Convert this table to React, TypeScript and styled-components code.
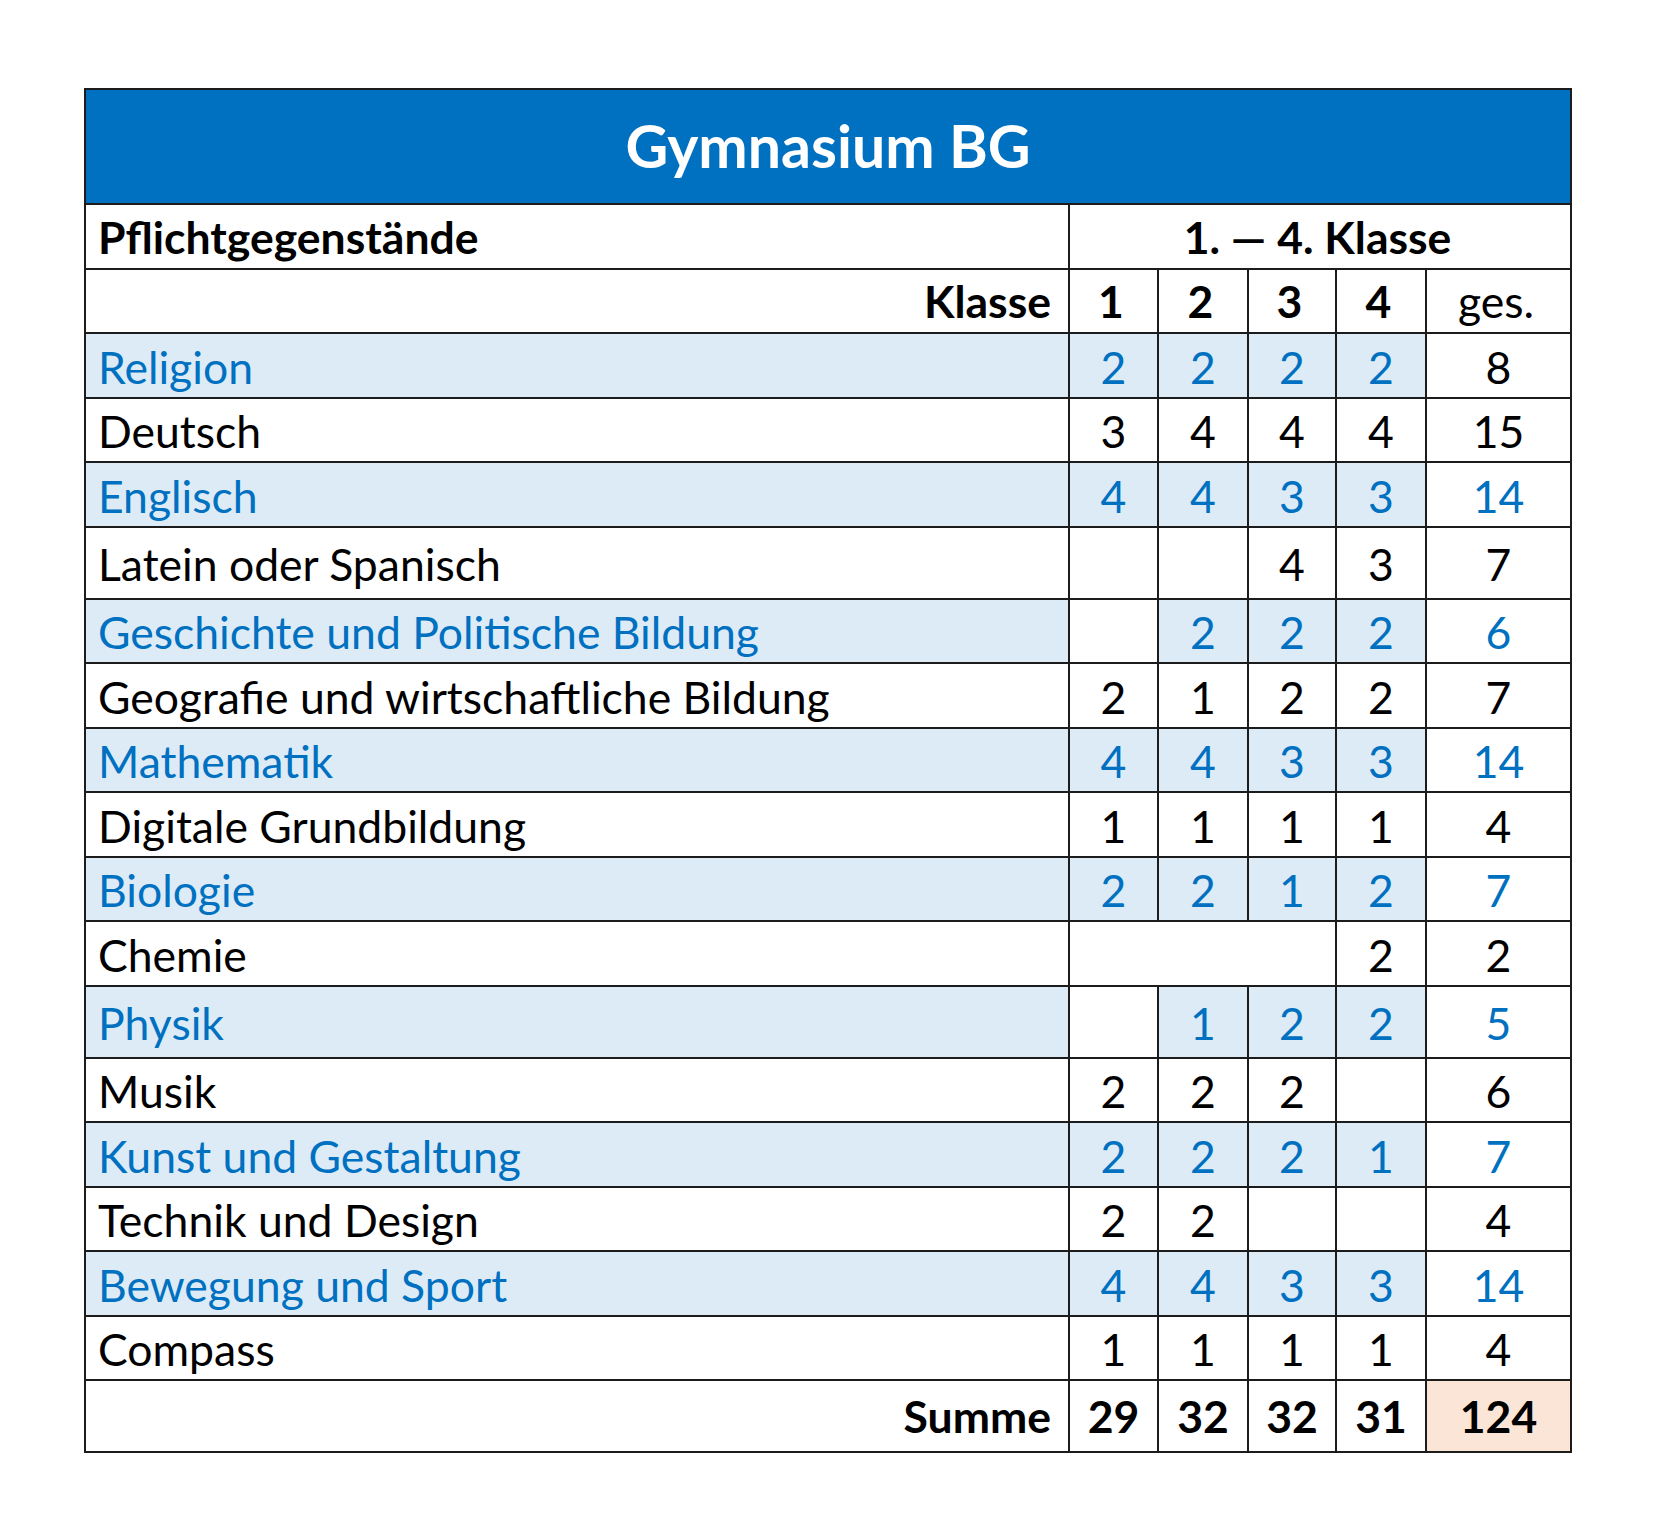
import React from 'react';
import styled, { createGlobalStyle } from 'styled-components';

const GlobalStyle = createGlobalStyle`
  html, body {
    margin: 0;
    padding: 0;
    background: #ffffff;
  }
  body {
    font-family: Lato, "Open Sans", "Liberation Sans", sans-serif;
  }
`;

const BLUE = '#0070c0';
const LIGHT = '#ddebf7';
const LINE = '2px solid #1c1c1c';

type Hours = (number | null)[];

interface Subject {
  name: string;
  hours: Hours;
  total: number;
  accent?: boolean;
  tall?: boolean;
  plainTotal?: boolean;
  mergeEmpty?: number;
}

const subjects: Subject[] = [
  { name: 'Religion', hours: [2, 2, 2, 2], total: 8, accent: true, plainTotal: true },
  { name: 'Deutsch', hours: [3, 4, 4, 4], total: 15 },
  { name: 'Englisch', hours: [4, 4, 3, 3], total: 14, accent: true },
  { name: 'Latein oder Spanisch', hours: [null, null, 4, 3], total: 7, tall: true },
  { name: 'Geschichte und Politische Bildung', hours: [null, 2, 2, 2], total: 6, accent: true },
  { name: 'Geografie und wirtschaftliche Bildung', hours: [2, 1, 2, 2], total: 7 },
  { name: 'Mathematik', hours: [4, 4, 3, 3], total: 14, accent: true },
  { name: 'Digitale Grundbildung', hours: [1, 1, 1, 1], total: 4 },
  { name: 'Biologie', hours: [2, 2, 1, 2], total: 7, accent: true },
  { name: 'Chemie', hours: [null, null, null, 2], total: 2, mergeEmpty: 3 },
  { name: 'Physik', hours: [null, 1, 2, 2], total: 5, accent: true, tall: true },
  { name: 'Musik', hours: [2, 2, 2, null], total: 6 },
  { name: 'Kunst und Gestaltung', hours: [2, 2, 2, 1], total: 7, accent: true },
  { name: 'Technik und Design', hours: [2, 2, null, null], total: 4 },
  { name: 'Bewegung und Sport', hours: [4, 4, 3, 3], total: 14, accent: true },
  { name: 'Compass', hours: [1, 1, 1, 1], total: 4 },
];

const sums = [29, 32, 32, 31];

const Page = styled.div`
  padding: 88px 84px 84px 84px;
`;

const Table = styled.table`
  width: 1486px;
  border-collapse: collapse;
  table-layout: fixed;
  border: ${LINE};
  font-size: 44.5px;
  line-height: 1.2;
  color: #000;
`;

const Row = styled.tr<{ $tall?: boolean }>`
  height: ${(p) => (p.$tall ? '72px' : '64.5px')};
`;

const TitleCell = styled.th`
  height: 113px;
  background: ${BLUE};
  color: #ffffff;
  font-size: 59px;
  font-weight: 700;
  text-align: center;
  vertical-align: middle;
  border: ${LINE};
  padding: 0;
`;

const HeadCell = styled.th<{ $align?: string; $light?: boolean }>`
  border: ${LINE};
  padding: 0 17px 0 12px;
  text-align: ${(p) => p.$align || 'center'};
  font-weight: ${(p) => (p.$light ? 400 : 700)};
  vertical-align: middle;
  white-space: nowrap;
`;

const SubjectCell = styled.td<{ $accent?: boolean }>`
  border: ${LINE};
  padding: 2px 12px 0 12px;
  text-align: left;
  white-space: nowrap;
  background: ${(p) => (p.$accent ? LIGHT : '#ffffff')};
  color: ${(p) => (p.$accent ? BLUE : '#000')};
`;

const NumCell = styled.td<{ $accent?: boolean; $fill?: boolean }>`
  border: ${LINE};
  padding: 2px 0 0 0;
  text-align: center;
  background: ${(p) => (p.$fill ? LIGHT : '#ffffff')};
  color: ${(p) => (p.$accent ? BLUE : '#000')};
`;

const SumLabel = styled.td`
  border: ${LINE};
  padding: 0 17px 0 12px;
  text-align: right;
  font-weight: 700;
`;

const SumCell = styled.td<{ $grand?: boolean }>`
  border: ${LINE};
  padding: 0;
  text-align: center;
  font-weight: 700;
  background: ${(p) => (p.$grand ? '#fbe5d6' : '#ffffff')};
`;

const SubjectRow = ({ s }: { s: Subject }) => {
  const cells: React.ReactNode[] = [];
  let i = 0;
  while (i < s.hours.length) {
    if (i === 0 && s.mergeEmpty) {
      cells.push(<NumCell key={i} colSpan={s.mergeEmpty} />);
      i += s.mergeEmpty;
      continue;
    }
    const h = s.hours[i];
    cells.push(
      <NumCell key={i} $accent={s.accent} $fill={s.accent && h !== null}>
        {h ?? ''}
      </NumCell>
    );
    i++;
  }
  return (
    <Row $tall={s.tall}>
      <SubjectCell $accent={s.accent}>{s.name}</SubjectCell>
      {cells}
      <NumCell $accent={s.accent && !s.plainTotal}>{s.total}</NumCell>
    </Row>
  );
};

export default function App() {
  return (
    <Page>
      <GlobalStyle />
      <Table>
        <colgroup>
          <col style={{ width: 984 }} />
          <col style={{ width: 89 }} />
          <col style={{ width: 90 }} />
          <col style={{ width: 88 }} />
          <col style={{ width: 90 }} />
          <col style={{ width: 145 }} />
        </colgroup>
        <thead>
          <tr>
            <TitleCell colSpan={6}>Gymnasium BG</TitleCell>
          </tr>
          <Row>
            <HeadCell $align="left">Pflichtgegenstände</HeadCell>
            <HeadCell colSpan={5}>1. — 4. Klasse</HeadCell>
          </Row>
          <Row>
            <HeadCell $align="right">Klasse</HeadCell>
            <HeadCell>1</HeadCell>
            <HeadCell>2</HeadCell>
            <HeadCell>3</HeadCell>
            <HeadCell>4</HeadCell>
            <HeadCell $light>ges.</HeadCell>
          </Row>
        </thead>
        <tbody>
          {subjects.map((s) => (
            <SubjectRow key={s.name} s={s} />
          ))}
          <Row $tall>
            <SumLabel>Summe</SumLabel>
            {sums.map((n, i) => (
              <SumCell key={i}>{n}</SumCell>
            ))}
            <SumCell $grand>124</SumCell>
          </Row>
        </tbody>
      </Table>
    </Page>
  );
}
